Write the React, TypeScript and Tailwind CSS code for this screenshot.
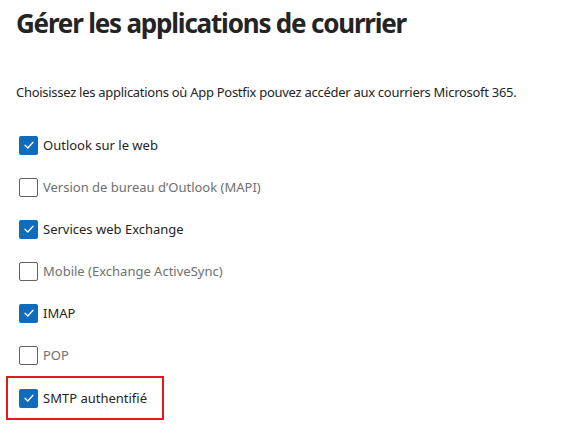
import React from "react";

const items: { label: string; checked: boolean; highlight?: boolean }[] = [
  { label: "Outlook sur le web", checked: true },
  { label: "Version de bureau d’Outlook (MAPI)", checked: false },
  { label: "Services web Exchange", checked: true },
  { label: "Mobile (Exchange ActiveSync)", checked: false },
  { label: "IMAP", checked: true },
  { label: "POP", checked: false },
  { label: "SMTP authentifié", checked: true, highlight: true },
];

function Box({ checked }: { checked: boolean }) {
  if (checked) {
    return (
      <span className="flex h-[19px] w-[19px] shrink-0 items-center justify-center rounded-[2px] bg-[#0f6cbd]">
        <svg width="12" height="12" viewBox="0 0 12 12" fill="none">
          <path d="M2 6.3 L4.8 9 L10 3.2" stroke="white" strokeWidth="1.3" strokeLinecap="round" strokeLinejoin="round" />
        </svg>
      </span>
    );
  }
  return <span className="block h-[19px] w-[19px] shrink-0 rounded-[2px] border border-[#616161] bg-white" />;
}

export default function App() {
  return (
    <div className="h-[435px] w-[577px] bg-white text-[#242424]" style={{ fontFamily: '"Noto Sans", "Open Sans", sans-serif' }}>
      <h1 className="pl-[16px] pt-[3px] text-[26px] font-bold leading-[40px] tracking-[-1.2px] text-[#242424]">Gérer les applications de courrier</h1>
      <p className="mt-[39px] pl-[16px] text-[13px] leading-[20px] tracking-[-0.28px] text-[#242424]">
        Choisissez les applications où App Postfix pouvez accéder aux courriers Microsoft 365.
      </p>
      <div className="mt-[22px] flex flex-col">
        {items.map((it) => (
          <div key={it.label} className="flex h-[42px] items-center pl-[6px]">
            <div
              className={
                it.highlight
                  ? "mt-[2px] flex h-[44px] w-[158px] items-center gap-[5px] border-2 border-[#e3191e] pl-[11px]"
                  : "flex items-center gap-[5px] pl-[13px]"
              }
            >
              <Box checked={it.checked} />
              <span className={"text-[13px] leading-[20px] " + (it.checked ? "text-[#242424]" : "text-[#707070]")}>{it.label}</span>
            </div>
          </div>
        ))}
      </div>
    </div>
  );
}
